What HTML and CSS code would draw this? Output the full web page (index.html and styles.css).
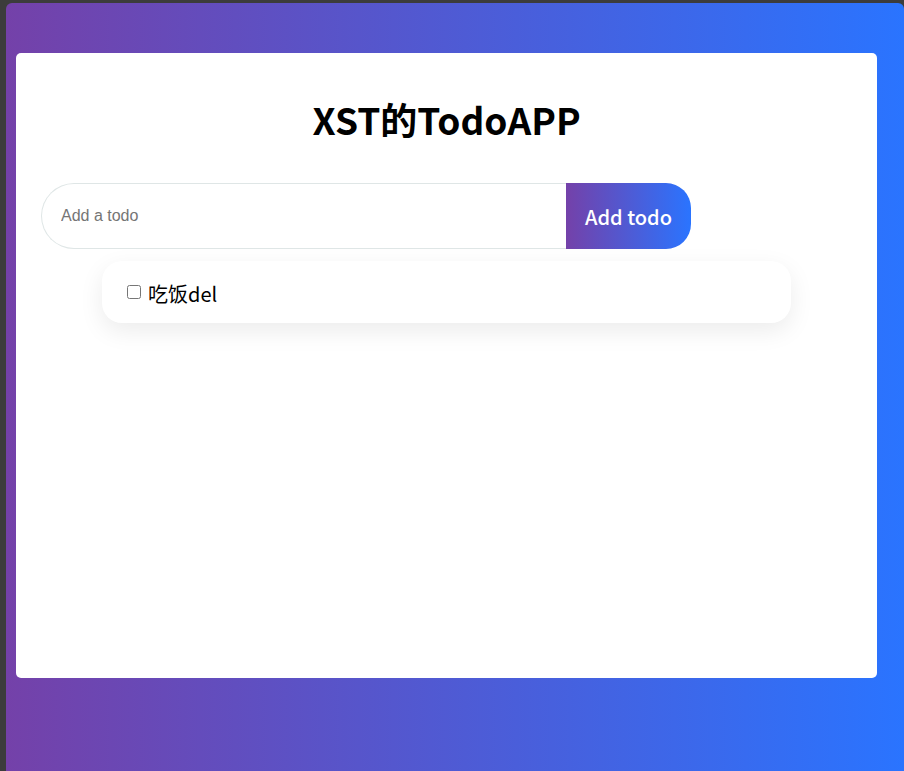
FILE: index.html
```html
<!DOCTYPE html>
<html lang="zh-CN">
<head>
    <meta charset="UTF-8">
    <meta name="viewport" content="width=device-width, initial-scale=1.0">
    <title>XST的TodoAPP</title>
    <link rel="stylesheet" href="styles.css">
</head>
<body>
    <div id="app">
        <div class="card">
            <h1 class="title">XST的TodoAPP</h1>
            <form class="todo-form">
                <input class="todo-input" type="text" placeholder="Add a todo">
                <button class="add-btn" type="button">Add todo</button>
            </form>
            <ul class="todo-list">
                <li class="todo-item">
                    <input type="checkbox">
                    <span class="todo-text">吃饭</span><span class="del">del</span>
                </li>
            </ul>
        </div>
    </div>
</body>
</html>
```

FILE: styles.css
```css
:root {
    --grad: linear-gradient(to right, #7441a9, #2a74ff);
    --frame: #3c3c3c;
}

* {
    margin: 0;
    padding: 0;
    box-sizing: border-box;
}

body {
    background: var(--frame);
    padding: 3px 0 0 6px;
    height: 100vh;
    overflow: hidden;
    font-family: "Noto Sans CJK SC", "Noto Sans", sans-serif;
}

#app {
    height: 100%;
    background: var(--grad);
    border-radius: 6px 6px 0 0;
    padding: 50px 27px 0 10px;
}

.card {
    background: white;
    border-radius: 5px;
    height: 625px;
    padding: 39px 25px 25px;
}

.title {
    text-align: center;
    font-size: 37px;
    font-weight: 700;
    color: #000;
    margin-bottom: 37px;
}

.todo-form {
    display: flex;
    width: 650px;
}

.todo-input {
    flex: 1;
    height: 66px;
    border: 1px solid #dfe6e6;
    border-right: none;
    border-radius: 33px 0 0 33px;
    padding: 0 19px;
    font-family: "Liberation Sans", Arial, sans-serif;
    font-size: 16px;
    outline: none;
}

.todo-input::placeholder {
    color: #757575;
}

.add-btn {
    width: 125px;
    height: 66px;
    border: none;
    border-radius: 0 25px 25px 0;
    background: var(--grad);
    color: white;
    font-family: "Noto Sans CJK SC", "Noto Sans", sans-serif;
    font-size: 20px;
    font-weight: 500;
}

.todo-list {
    list-style: none;
    width: 689px;
    margin: 12px auto 0;
}

.todo-item {
    background: white;
    border-radius: 20px;
    height: 62px;
    padding: 3px 25px 0;
    display: flex;
    align-items: center;
    box-shadow: 0 8px 25px rgba(0, 0, 0, 0.08);
    font-size: 20px;
    color: #000;
}

.todo-item input {
    width: 14px;
    height: 14px;
    margin: 0 7px 4px 0;
}
```
